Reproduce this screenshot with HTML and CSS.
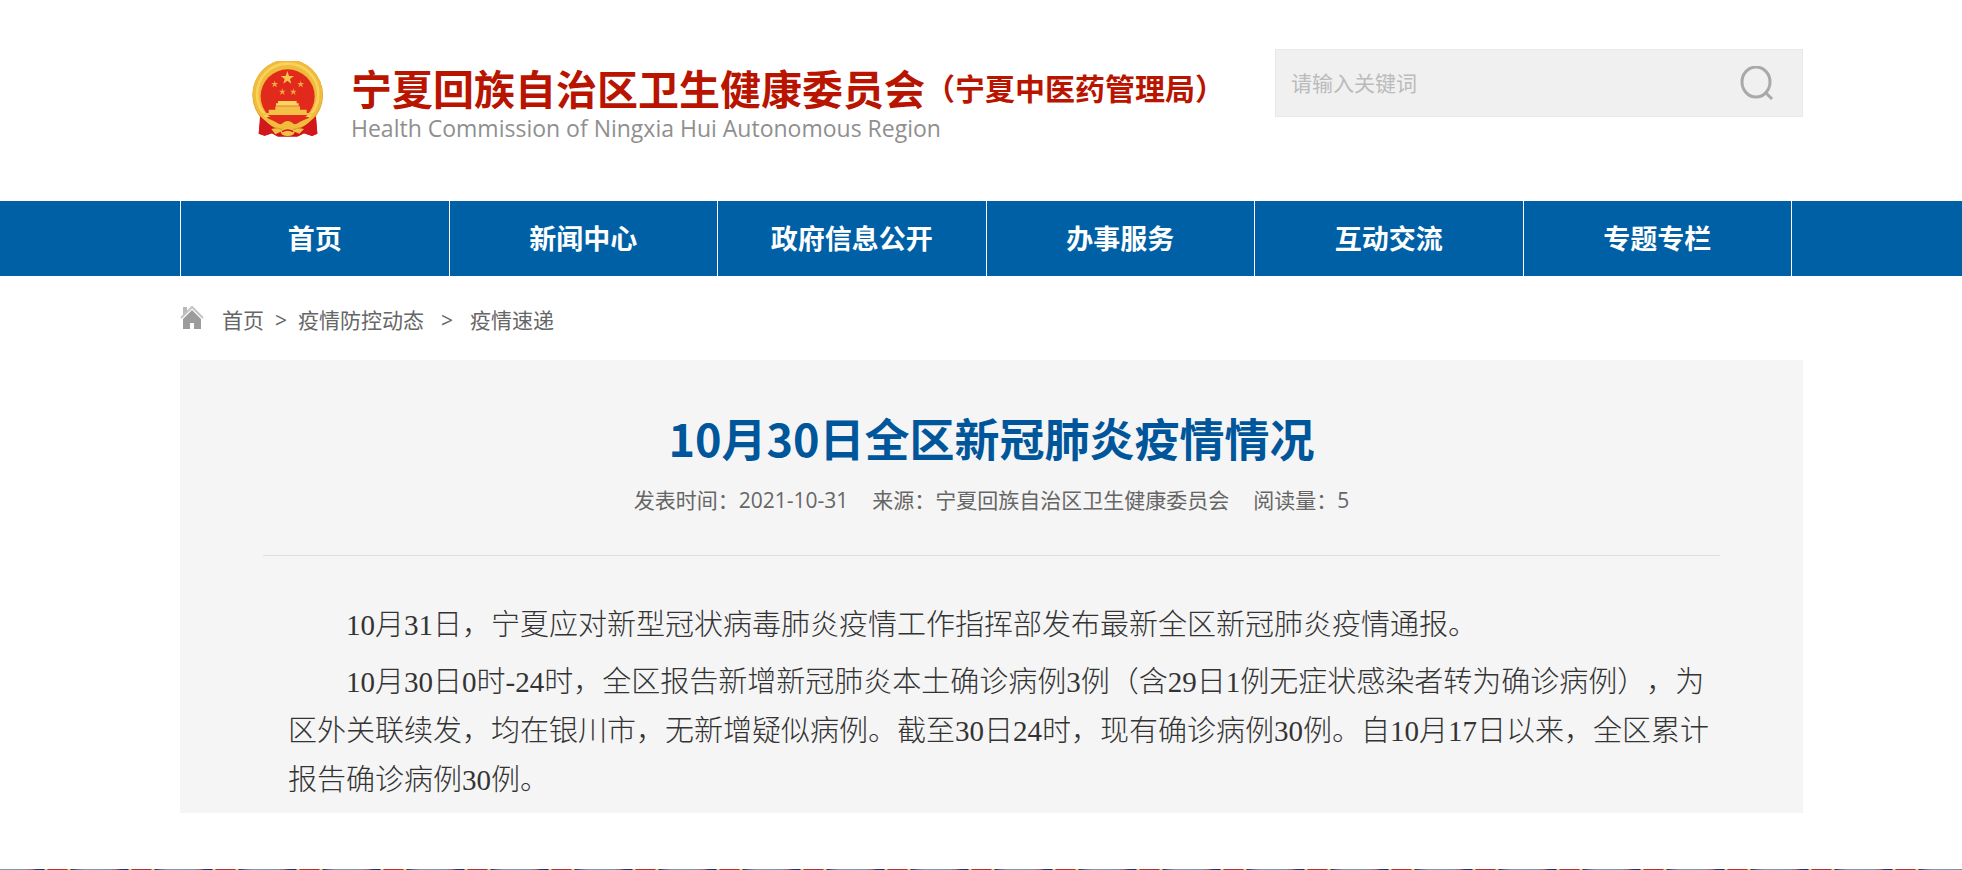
FILE: index.html
```html
<!DOCTYPE html>
<html lang="zh-CN">
<head>
    <meta charset="UTF-8">
    <title>10月30日全区新冠肺炎疫情情况</title>
    <meta name="viewport" content="width=device-width, initial-scale=1.0">
    <link rel="stylesheet" href="styles.css">
</head>
<body>
    <header class="header wrap">
        <a class="logo" href="#">
            <svg class="emblem" viewBox="22 18 216 228" aria-hidden="true">
                <path d="M50 170 L42 236 L60 242 L82 235 L100 245 H158 L178 235 L202 243 L218 236 L212 170 Z" fill="#c9141a"/>
                <path d="M60 196 L58 236 M196 196 L200 236 M76 210 L72 232 M184 210 L188 232" stroke="#8f0c10" stroke-width="3" fill="none"/>
                <circle cx="129" cy="120" r="106" fill="#d99a1c"/>
                <circle cx="129" cy="118" r="105" fill="#f0bb3a"/>
                <circle cx="129" cy="118" r="92" fill="none" stroke="#f8d25c" stroke-width="8"/>
                <circle cx="129" cy="124" r="81" fill="#e22a1c"/>
                <path d="M128 48 L133 63 L148 63 L136 72 L140 86 L128 77 L116 86 L120 72 L108 63 L123 63 Z" fill="#f6c64a"/>
                <path id="star" d="M90 76 L92 84 L100 84 L94 89 L97 97 L90 92 L83 97 L86 89 L80 84 L88 84 Z" fill="#f0a83c"/>
                <use href="#star" x="78"/>
                <use href="#star" x="23" y="23"/>
                <use href="#star" x="56" y="23"/>
                <path d="M100 138 H156 V145 H162 V152 H94 V145 H100 Z" fill="#f8d460"/>
                <path d="M92 154 H166 V164 H186 V174 H206 V180 H52 V174 H72 V164 H92 Z" fill="#f3c047"/>
                <path d="M66 187 Q129 176 194 187 L176 208 H84 Z" fill="#e22a1c"/>
                <path d="M50 184 Q84 194 108 210 Q129 186 150 210 Q174 194 210 184 Q180 222 148 218 Q129 208 110 218 Q80 222 50 184 Z" fill="#f2bd3e"/>
                <path d="M46 184 L106 236 L98 244 L82 235 L60 242 L42 236 Z M214 184 L154 236 L160 244 L178 235 L202 243 L218 236 Z" fill="#d3181b"/>
                <path d="M80 222 Q98 216 110 224 Q129 214 148 224 Q162 216 178 222 L164 236 L150 230 Q148 243 129 243 Q110 243 108 230 L92 238 Z" fill="#f3c047"/>
                <path d="M112 230 Q129 220 146 230" fill="none" stroke="#d3181b" stroke-width="4"/>
            </svg>
            <span class="logo-text">
                <span class="logo-row">
                    <strong class="logo-name">宁夏回族自治区卫生健康委员会</strong>
                    <span class="logo-sub">（宁夏中医药管理局）</span>
                </span>
                <span class="logo-en">Health Commission of Ningxia Hui Autonomous Region</span>
            </span>
        </a>
        <form class="search">
            <input type="text" placeholder="请输入关键词" aria-label="请输入关键词">
            <button type="button" aria-label="搜索">
                <svg viewBox="0 0 34 34" width="34" height="34">
                    <ellipse cx="16" cy="16" rx="14" ry="15" fill="none" stroke="#a9a9a9" stroke-width="3"/>
                    <path d="M25 26 L32 33" stroke="#a9a9a9" stroke-width="3"/>
                </svg>
            </button>
        </form>
    </header>

    <nav class="menu wrap">
        <ul>
            <li><a href="#">首页</a></li>
            <li><a href="#">新闻中心</a></li>
            <li><a href="#">政府信息公开</a></li>
            <li><a href="#">办事服务</a></li>
            <li><a href="#">互动交流</a></li>
            <li><a href="#">专题专栏</a></li>
        </ul>
    </nav>

    <div class="wrap">
        <div class="crumbs">
            <svg class="home" viewBox="0 0 24 24" width="24" height="24" aria-hidden="true">
                <path d="M3 2 H7 V8 L3 11 Z" fill="#b9b9b9"/>
                <path d="M1 13 L12 2 L23 13" fill="none" stroke="#c4c4c4" stroke-width="2"/>
                <path d="M3 14 L12 5 L21 14 V24 H14 V18 H10 V24 H3 Z" fill="#9c9c9c"/>
            </svg>
            <a href="#">首页</a>
            <span>&gt;</span>
            <a href="#">疫情防控动态</a>
            <span class="wide">&gt;</span>
            <a href="#">疫情速递</a>
        </div>

        <main class="article">
            <h1>10月30日全区新冠肺炎疫情情况</h1>
            <div class="meta">
                <span>发表时间：2021-10-31</span>
                <span>来源：宁夏回族自治区卫生健康委员会</span>
                <span>阅读量：5</span>
            </div>
            <div class="content">
                <p>10月31日，宁夏应对新型冠状病毒肺炎疫情工作指挥部发布最新全区新冠肺炎疫情通报。</p>
                <p>10月30日0时-24时，全区报告新增新冠肺炎本土确诊病例3例（含29日1例无症状感染者转为确诊病例），为区外关联续发，均在银川市，无新增疑似病例。截至30日24时，现有确诊病例30例。自10月17日以来，全区累计报告确诊病例30例。</p>
            </div>
        </main>
    </div>

    <footer class="footer"></footer>
</body>
</html>
```
FILE: styles.css
```css
* { box-sizing: border-box; }
body {
    margin: 0;
    background: #fff;
    color: #666;
    font-family: "Open Sans", "Noto Sans CJK SC", sans-serif;
    font-size: 21px;
    line-height: 30px;
}
a { color: inherit; text-decoration: none; }
.wrap { padding: 0 159px 0 180px; }

/* шапка */
.header {
    display: flex;
    justify-content: space-between;
    align-items: flex-start;
    padding-top: 49px;
    padding-bottom: 57px;
    min-height: 201px;
}
.logo {
    display: flex;
    align-items: flex-start;
    gap: 27px;
    padding: 12px 0 0 72px;
    white-space: nowrap;
}
.emblem { display: block; width: 72px; height: 76px; flex: none; }
.logo-text { display: block; }
.logo-row {
    display: flex;
    align-items: center;
    height: 52px;
    color: #b81400;
    font-family: "Noto Sans CJK SC", sans-serif;
}
.logo-name { font-size: 41px; font-weight: bold; line-height: 50px; }
.logo-sub { font-size: 30px; font-weight: bold; line-height: 50px; }
.logo-en {
    display: block;
    color: #8f8f8f;
    font-size: 23px;
    line-height: 30px;
}
.search {
    display: flex;
    align-items: center;
    width: 528px;
    height: 68px;
    background: #f0f0f0;
    border: 1px solid #e8e8e8;
}
.search input {
    flex: 1;
    min-width: 0;
    height: 66px;
    padding: 0 15px;
    border: none;
    outline: none;
    background: none;
    font: inherit;
}
.search input::placeholder { color: #bbb; }
.search button {
    display: flex;
    padding: 0;
    margin-right: 28px;
    border: none;
    background: none;
    cursor: pointer;
}

/* меню */
.menu { background: #0060a6; }
.menu ul {
    display: flex;
    margin: 0 11px 0 0;
    padding: 0;
    list-style: none;
    border-left: 1px solid #fff;
}
.menu li { flex: 1; border-right: 1px solid #fff; }
.menu a {
    display: block;
    padding-top: 1px;
    color: #fff;
    font-size: 27px;
    font-weight: bold;
    line-height: 74px;
    text-align: center;
}
.menu a:hover { background: #004f8a; }

.crumbs {
    display: flex;
    align-items: center;
    gap: 11px;
    height: 84px;
    padding-top: 4px;
}
.home { margin: 0 7px 6px 0; }
.crumbs .wide { margin: 0 6px; }

/* статья */
.article {
    background: #f5f5f5;
    padding: 48px 83px 0;
}
.article h1 {
    margin: 0;
    color: #00569a;
    font-family: "Noto Sans CJK SC", sans-serif;
    font-size: 45px;
    line-height: 60px;
    text-align: center;
}
.meta {
    display: flex;
    justify-content: center;
    gap: 24px;
    padding: 17px 0 40px;
    border-bottom: 1px solid #ddd;
}
.content {
    padding: 45px 7px 0 25px;
    color: #333;
    font-family: "Liberation Serif", "Noto Sans CJK SC", serif;
    font-size: 29px;
    font-weight: 300;
    line-height: 49px;
    text-spacing-trim: space-all;
}
.content p {
    margin: 0 0 8px;
    text-indent: 2em;
}
.article::after { content: ""; display: table; }

.footer {
    height: 1px;
    margin-top: 56px;
    background: repeating-linear-gradient(90deg, #8a9aa5 0, #7f95a8 26px, #a86a60 32px, #2a3a80 36px, #1c2a70 44px, #f0d860 45px, #f0d860 47px, #b03038 48px, #b03038 67px, #f0d860 68px, #f0d860 70px, #1c2a70 71px, #6a6a98 77px, #8a9aa5 84px);
}
```
